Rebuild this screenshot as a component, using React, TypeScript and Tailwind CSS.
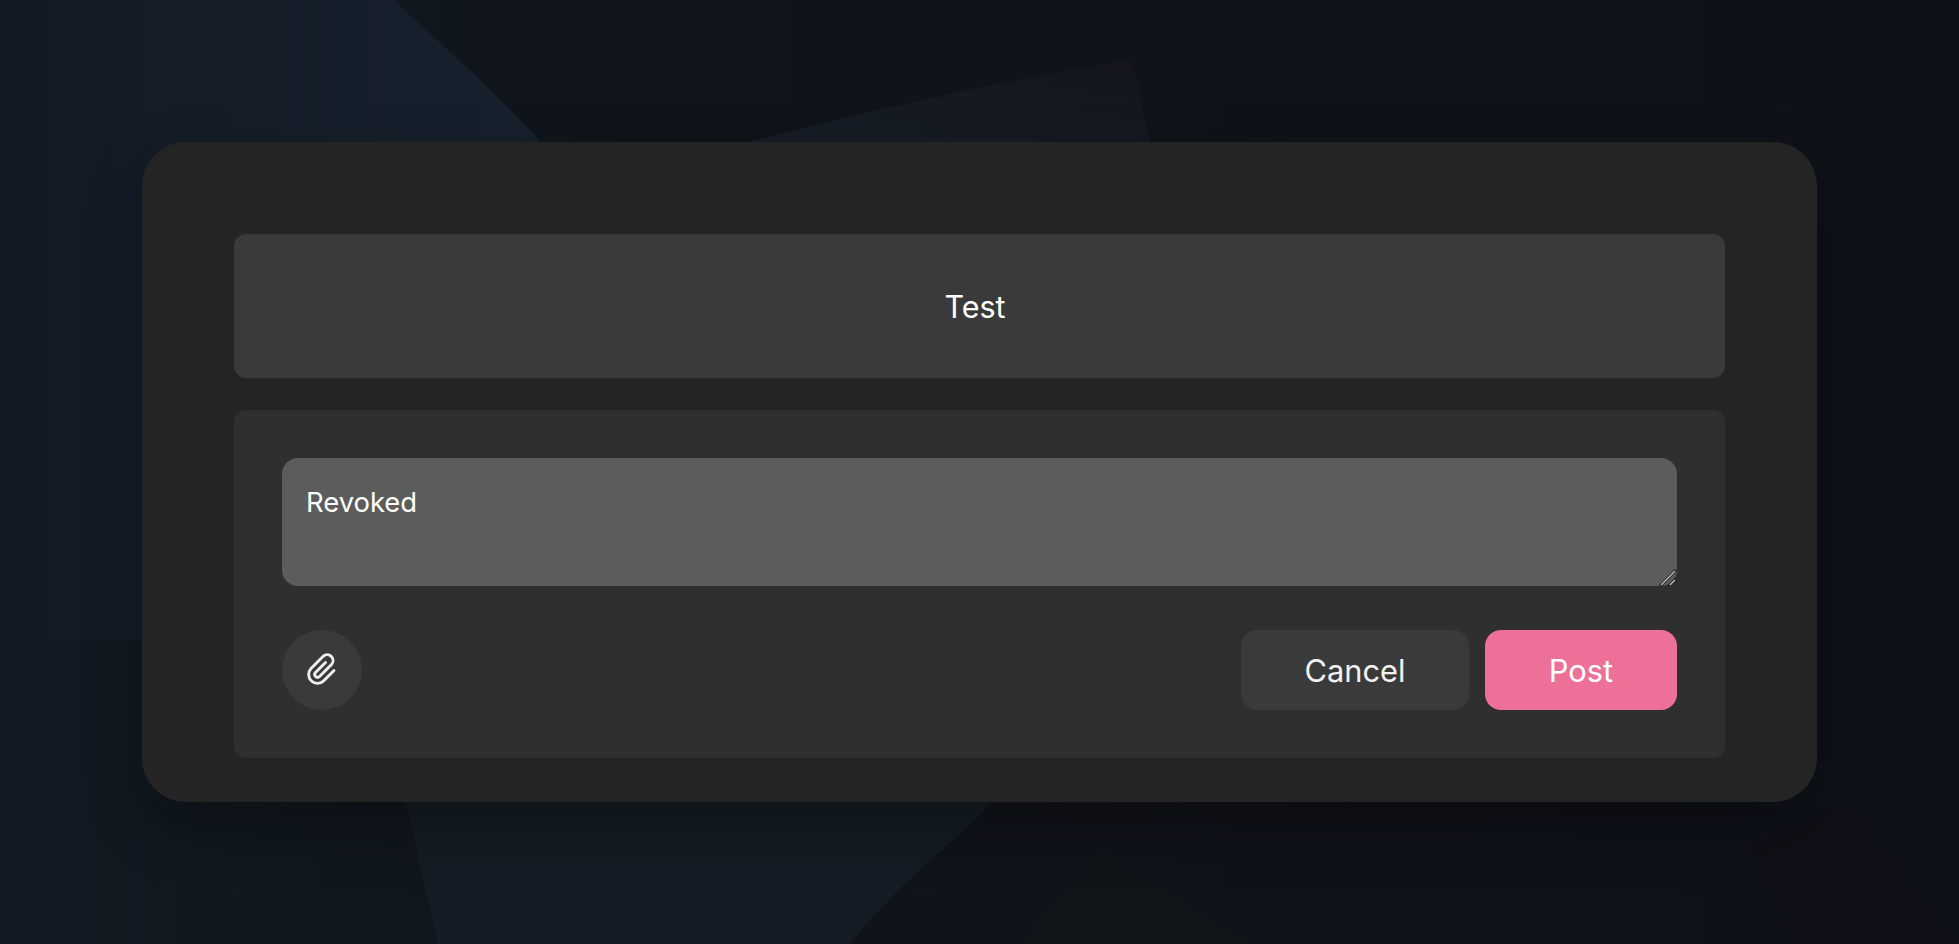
import React from 'react';

const font = { fontFamily: 'Inter, "Liberation Sans", sans-serif' };

function Backdrop() {
  return (
    <svg className="absolute inset-0 w-full h-full" viewBox="0 0 1959 944" preserveAspectRatio="none">
      <defs>
        <linearGradient id="base" x1="0" y1="0" x2="1" y2="0">
          <stop offset="0" stopColor="#121a23" />
          <stop offset="0.35" stopColor="#10141b" />
          <stop offset="0.7" stopColor="#0f1219" />
          <stop offset="1" stopColor="#0e1119" />
        </linearGradient>
        <linearGradient id="wave" x1="0" y1="0" x2="1" y2="0">
          <stop offset="0" stopColor="#121b25" />
          <stop offset="1" stopColor="#17212d" />
        </linearGradient>
        <linearGradient id="sail" x1="0" y1="1" x2="1" y2="0">
          <stop offset="0" stopColor="#171e28" />
          <stop offset="1" stopColor="#13151b" />
        </linearGradient>
      </defs>
      <rect width="1959" height="944" fill="url(#base)" />
      <path d="M0 0H394C430 35 500 95 540 142V640H0Z" fill="url(#wave)" />
      <path d="M750 142C850 115 1000 80 1132 60L1150 142Z" fill="url(#sail)" />
      <path d="M405 800L438 944H850C900 880 960 840 993 800Z" fill="#151c25" />
      <path d="M1020 944L1100 850L1250 944Z" fill="#11151a" />
      <path d="M1750 850L1840 800L1959 944H1800Z" fill="#110f17" />
    </svg>
  );
}

export default function App() {
  return (
    <div className="relative h-screen w-full overflow-hidden bg-[#0f131a] flex items-center justify-center" style={font}>
      <Backdrop />
      <div className="relative w-[1675px] rounded-[44px] bg-[#242424] px-[92px] pt-[92px] pb-[44px] shadow-[0_25px_60px_rgba(0,0,0,0.3)]">
        <div className="h-[144px] rounded-[12px] bg-[#3a3a3a] flex items-center justify-center pt-[1px] pr-[9px] text-[30.5px] text-white">
          Test
        </div>
        <div className="mt-[32px] rounded-[12px] bg-[#2f2f2f] p-[48px]">
          <div className="relative">
            <textarea
              readOnly
              defaultValue="Revoked"
              className="block w-full h-[128px] resize-none rounded-[16px] bg-[#5c5c5c] px-[24px] pt-[27px] text-[27.4px] leading-[34px] text-white outline-none"
            />
            <svg className="absolute right-0 bottom-0" width="18" height="18" viewBox="0 0 18 18" fill="none" strokeLinecap="square">
              <path d="M2 17L16 3M11 17L16 12" stroke="#1f1f1f" strokeWidth="3" />
              <path d="M2.5 16.5L15.5 3.5M11.5 16.5L15.5 12.5" stroke="#c4c4c4" strokeWidth="1.4" />
            </svg>
          </div>
          <div className="mt-[44px] flex items-center justify-between">
            <button className="w-[80px] h-[80px] rounded-full bg-[#3a3a3a] flex items-center justify-center">
              <svg width="46" height="40" viewBox="0 0 46 40" fill="none" stroke="#eeeeee" strokeWidth="2.9" strokeLinecap="round" strokeLinejoin="round">
                <path d="M35 20.5L25 30.5A8.8 8.8 0 0 1 12 18.5L24.5 6A5.9 5.9 0 0 1 33 14L20.5 26.5A2.83 2.83 0 0 1 16.5 22.5L26.5 12.5" />
              </svg>
            </button>
            <div className="flex gap-[16px]">
              <button className="w-[228px] h-[80px] rounded-[16px] bg-[#3a3a3a] pt-[2px] text-[30.8px] text-[#f2f2f2]">Cancel</button>
              <button className="w-[192px] h-[80px] rounded-[16px] bg-[#ec7097] pt-[2px] text-[30.8px] text-white">Post</button>
            </div>
          </div>
        </div>
      </div>
    </div>
  );
}
